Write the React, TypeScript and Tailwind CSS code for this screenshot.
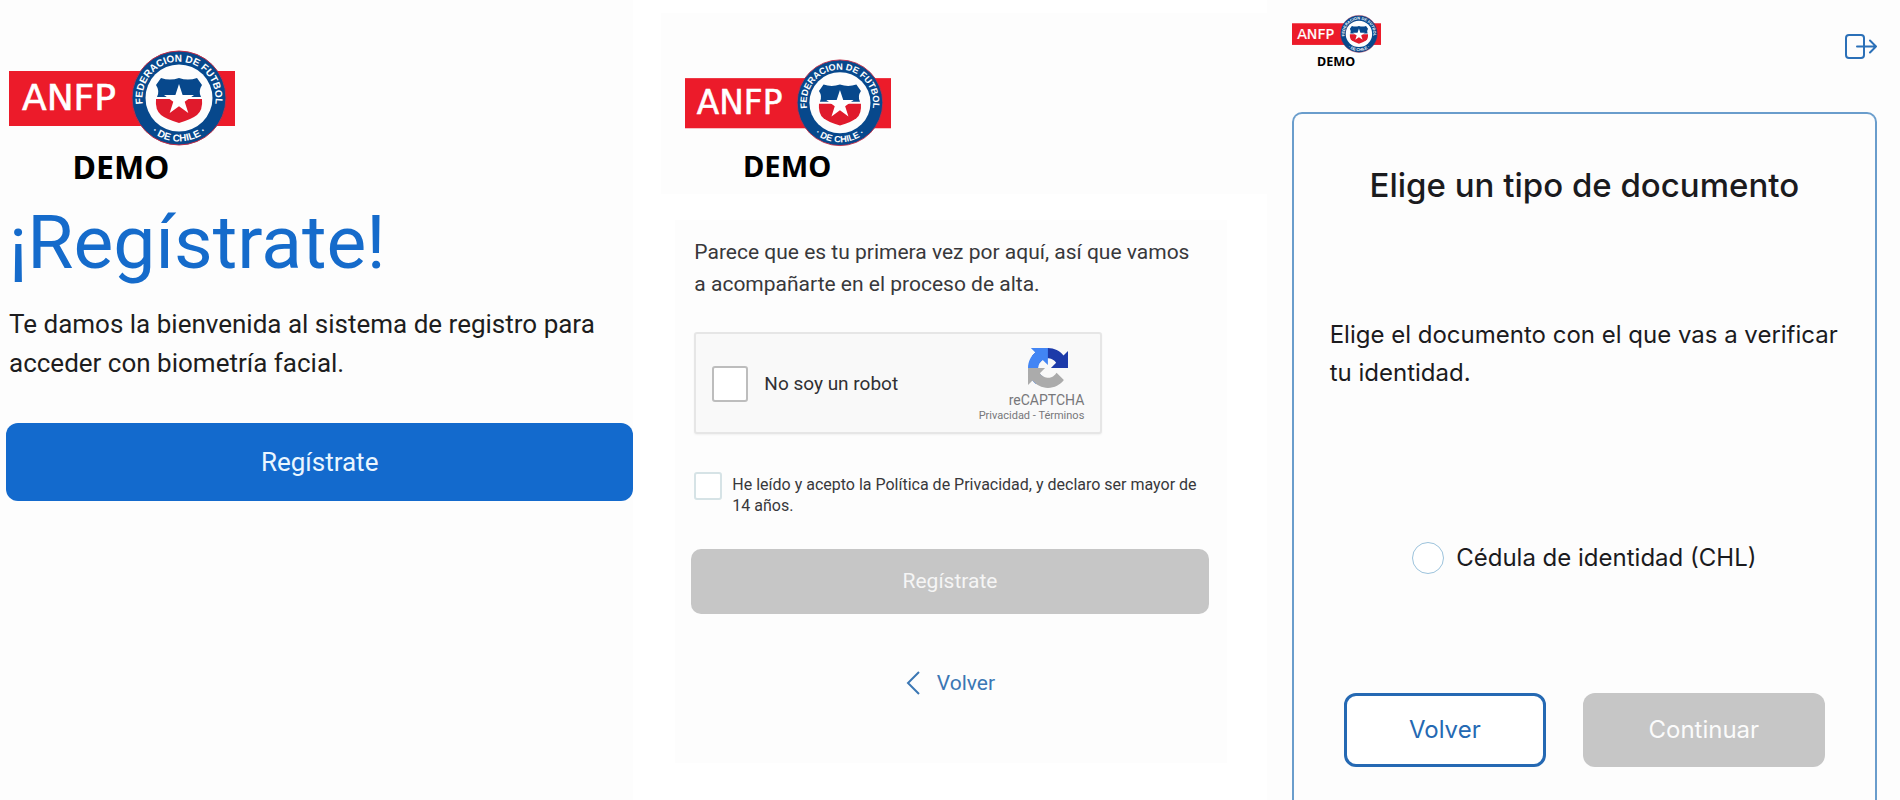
import { useState } from 'react'

function Logo({ id, className }: { id: string; className?: string }) {
  return (
    <svg viewBox="0 0 226 130" className={className} overflow="visible" role="img" aria-label="ANFP Demo">
      <rect x="0" y="21" width="226" height="55" fill="#ec1b2a" />
      <text
        x="60"
        y="60"
        textAnchor="middle"
        fontFamily="'DejaVu Sans', sans-serif"
        fontSize="36"
        fill="#fff"
        stroke="#fff"
        strokeWidth="0.6"
      >
        ANFP
      </text>
      <circle cx="170" cy="48" r="47" fill="#07488c" stroke="#c22c46" strokeWidth="1" />
      <circle cx="170" cy="48" r="33.5" fill="#fdfdfd" />
      <path id={`${id}-top`} d="M134.6 57 A36.5 36.5 0 1 1 205.4 57" fill="none" />
      <path id={`${id}-bottom`} d="M126.5 48 A43.5 43.5 0 0 0 213.5 48" fill="none" />
      <g fontFamily="'Liberation Sans', sans-serif" fontSize="10" fontWeight="700" fill="#fff">
        <text>
          <textPath href={`#${id}-top`} startOffset="50%" textAnchor="middle">
            FEDERACION DE FUTBOL
          </textPath>
        </text>
        <text>
          <textPath href={`#${id}-bottom`} startOffset="50%" textAnchor="middle">
            · DE CHILE ·
          </textPath>
        </text>
      </g>
      {/* shield */}
      <path
        d="M152 28 Q161 31 170 28 Q179 31 188 28 L193 35 Q189 41 192 47 L148 47 Q151 41 147 35 Z"
        fill="#07488c"
      />
      <path d="M147 49 H193 Q194 60 188 65 Q183 69 170 73 Q157 69 152 65 Q146 60 147 49 Z" fill="#e01a2c" />
      <path
        d="M170 34 L173.6 45 L185 45 L175.7 51.8 L179.3 63 L170 56.2 L160.7 63 L164.3 51.8 L155 45 L166.4 45 Z"
        fill="#fff"
      />
      <text
        x="112"
        y="129"
        textAnchor="middle"
        fontFamily="'Noto Sans', sans-serif"
        fontSize="32"
        fontWeight="700"
        fill="#000"
      >
        DEMO
      </text>
    </svg>
  )
}

function RecaptchaIcon() {
  return (
    <svg viewBox="0 0 64 64" className="size-10" aria-hidden="true">
      <path
        d="M64 31.955l-.033-1.37V4.687l-7.16 7.16C50.948 4.674 42.033.093 32.05.093c-10.4 0-19.622 4.96-25.458 12.64l11.736 11.86a15.55 15.55 0 0 1 4.754-5.334c2.05-1.6 4.952-2.906 8.968-2.906.485 0 .86.057 1.135.163 4.976.393 9.288 3.14 11.828 7.124l-8.307 8.307L64 31.953"
        fill="#1c3aa9"
      />
      <path
        d="M31.862.094l-1.37.033H4.594l7.16 7.16C4.58 13.147 0 22.06 0 32.046c0 10.4 4.96 19.622 12.64 25.458L24.5 45.768a15.55 15.55 0 0 1-5.334-4.754c-1.6-2.05-2.906-4.952-2.906-8.968 0-.485.057-.86.163-1.135.393-4.976 3.14-9.288 7.124-11.828l8.307 8.307L31.86.095"
        fill="#4285f4"
      />
      <path
        d="M.001 32.045l.033 1.37v25.898l7.16-7.16c5.86 7.173 14.774 11.754 24.76 11.754 10.4 0 19.622-4.96 25.458-12.64l-11.736-11.86a15.55 15.55 0 0 1-4.754 5.334c-2.05 1.6-4.952 2.906-8.968 2.906-.485 0-.86-.057-1.135-.163-4.976-.393-9.288-3.14-11.828-7.124l8.307-8.307-37.294.03"
        fill="#ababab"
      />
    </svg>
  )
}

function WelcomeScreen() {
  return (
    <section className="bg-[#fdfdfd] pt-[50px]">
      <Logo id="welcome" className="ml-[9px] w-[226px]" />
      <h1 className="mt-4 ml-[9px] text-[75px] leading-[92px] text-[#156bcb]">¡Regístrate!</h1>
      <p className="mt-[17px] ml-[9px] max-w-[610px] text-[26px] leading-[39px] text-[#1d1d20]">
        Te damos la bienvenida al sistema de registro para acceder con biometría facial.
      </p>
      <div className="mt-10 pl-1.5">
        <button type="button" className="h-[78px] w-full rounded-xl bg-[#136acd] text-[26px] text-[#eaf6ff]">
          Regístrate
        </button>
      </div>
    </section>
  )
}

function SignUpScreen() {
  const [robot, setRobot] = useState(false)
  const [accepted, setAccepted] = useState(false)

  return (
    <section className="bg-white pt-[13px]">
      <header className="ml-7 bg-[#fdfdfd] px-6 pt-[46px] pb-[17px]">
        <Logo id="signup" className="w-[206px]" />
      </header>
      <div className="mt-[26px] mr-10 ml-[42px] bg-[#fdfdfd] pt-4 pr-[18px] pb-16 pl-4">
        <p className="pr-4 pl-[3px] text-[21px] leading-8 text-[#38383b]">
          Parece que es tu primera vez por aquí, así que vamos a acompañarte en el proceso de alta.
        </p>

        <div className="mt-8 ml-[3px] flex w-[408px] items-center justify-between rounded-[3px] border-2 border-[#e6e6e6] bg-[#f9f9f9] pt-2.5 pr-4 pb-2 pl-4 shadow-xs">
          <label className="flex items-center gap-4 text-[19px] text-[#303033]">
            <input
              type="checkbox"
              checked={robot}
              onChange={(e) => setRobot(e.target.checked)}
              className="size-9 appearance-none rounded-[3px] border-2 border-[#bdbdbd] bg-white checked:bg-[#4285f4]"
            />
            No soy un robot
          </label>
          <div className="flex flex-col items-end text-[#77777a]">
            <div className="mt-1 mr-4">
              <RecaptchaIcon />
            </div>
            <span className="mt-1 text-sm leading-4">reCAPTCHA</span>
            <span className="text-[11px] leading-4">
              <a href="#privacidad">Privacidad</a> - <a href="#terminos">Términos</a>
            </span>
          </div>
        </div>

        <label className="mt-[38px] ml-[3px] flex gap-2.5 text-base leading-[21px] text-[#38383b]">
          <input
            type="checkbox"
            checked={accepted}
            onChange={(e) => setAccepted(e.target.checked)}
            className="size-7 shrink-0 appearance-none rounded-[3px] border-2 border-[#d6e3e6] bg-white checked:bg-[#136acd]"
          />
          <span className="pt-0.5">He leído y acepto la Política de Privacidad, y declaro ser mayor de 14 años.</span>
        </label>

        <button
          type="button"
          disabled={!robot || !accepted}
          className="mt-[33px] h-[65px] w-full rounded-[10px] bg-[#c6c6c6] text-[21px] text-[#f5f5f5]"
        >
          Regístrate
        </button>

        <div className="mt-[53px] flex justify-center">
          <button type="button" className="flex items-center gap-4 text-[21px] leading-8 text-[#3b77b4]">
            <svg viewBox="0 0 16 24" className="h-6 w-4" fill="none" stroke="currentColor" strokeWidth="2">
              <path d="M14 1 L3 12 L14 23" />
            </svg>
            Volver
          </button>
        </div>
      </div>
    </section>
  )
}

function DocumentScreen() {
  const [selected, setSelected] = useState(false)

  return (
    <section className="flex flex-col bg-[#fdfdfd] pt-[15px] pr-[23px] pl-[25px] font-['Inter',sans-serif]">
      <header className="flex items-start justify-between">
        <Logo id="document" className="w-[89px]" />
        <button type="button" aria-label="Salir" className="mt-[19px]">
          <svg
            viewBox="0 0 32 26"
            className="h-[26px] w-8"
            fill="none"
            stroke="#2b70b8"
            strokeWidth="2"
            strokeLinecap="round"
            strokeLinejoin="round"
          >
            <rect x="1" y="1" width="18" height="23" rx="3" />
            <path d="M12 12.5 H31 M25 6.5 L31 12.5 L25 18.5" />
          </svg>
        </button>
      </header>

      <div className="mt-[46px] flex flex-1 flex-col rounded-t-[10px] border-x-2 border-t-2 border-[#6a9dcc] px-5 pt-[48px] text-[#1b1b1e]">
        <h2 className="text-center text-[33px] leading-[46px] font-medium">Elige un tipo de documento</h2>
        <p className="mt-[108px] pl-4 text-[24px] leading-[38px]">
          Elige el documento con el que vas a verificar tu identidad.
        </p>
        <label className="mt-[147px] flex items-center justify-center gap-3 text-[24px] leading-[38px]">
          <input
            type="radio"
            name="documento"
            checked={selected}
            onChange={() => setSelected(true)}
            className="size-8 appearance-none rounded-full border border-[#9cc3dc] bg-white checked:border-8"
          />
          Cédula de identidad (CHL)
        </label>
        <div className="mt-[116px] flex justify-center gap-[37px] text-[24px]">
          <button type="button" className="h-[74px] w-[202px] rounded-xl border-3 border-[#2569b3] bg-white text-[#2569b3]">
            Volver
          </button>
          <button type="button" disabled={!selected} className="h-[74px] w-[242px] rounded-xl bg-[#c6c6c6] text-[#fbfbfb]">
            Continuar
          </button>
        </div>
      </div>
    </section>
  )
}

export default function App() {
  return (
    <main className="grid min-h-screen grid-cols-3 font-['Roboto',sans-serif]">
      <WelcomeScreen />
      <SignUpScreen />
      <DocumentScreen />
    </main>
  )
}
